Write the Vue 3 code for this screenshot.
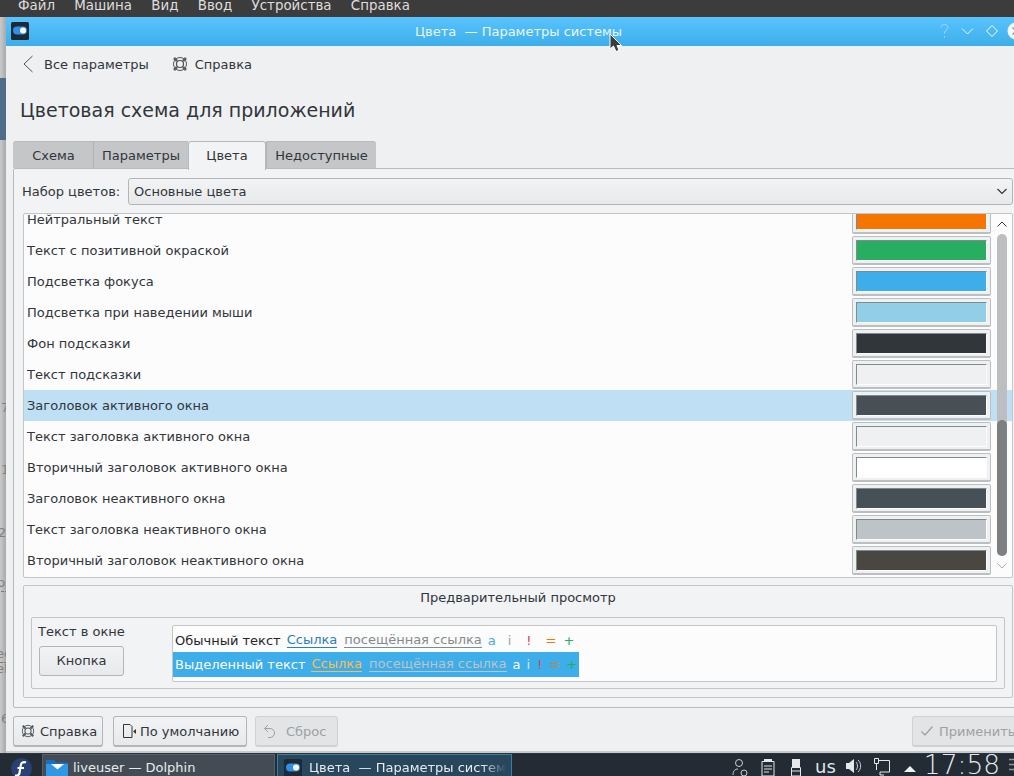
<script setup>
const menu = ['Файл', 'Машина', 'Вид', 'Ввод', 'Устройства', 'Справка']
const tabs = ['Схема', 'Параметры', 'Цвета', 'Недоступные']

const rows = [
  { label: 'Нейтральный текст', color: '#f67400' },
  { label: 'Текст с позитивной окраской', color: '#27ae60' },
  { label: 'Подсветка фокуса', color: '#3daee9' },
  { label: 'Подсветка при наведении мыши', color: '#93cee9' },
  { label: 'Фон подсказки', color: '#31363b' },
  { label: 'Текст подсказки', color: '#eff0f1' },
  { label: 'Заголовок активного окна', color: '#475057', selected: true },
  { label: 'Текст заголовка активного окна', color: '#eff0f1' },
  { label: 'Вторичный заголовок активного окна', color: '#ffffff' },
  { label: 'Заголовок неактивного окна', color: '#475057' },
  { label: 'Текст заголовка неактивного окна', color: '#bdc3c7' },
  { label: 'Вторичный заголовок неактивного окна', color: '#4a4641' }
]

// bits of the window behind, only their edge shows left of this one
const behind = [
  { text: '7', y: 400, x: 1 },
  { text: '1', y: 462, x: 1 },
  { text: '26', y: 525, x: -2 },
  { text: 'ps', y: 575, x: -3, dashed: true },
  { text: 'ec', y: 646, x: -4, dashed: true },
  { text: 'eL', y: 661, x: -4 },
  { text: '6', y: 711, x: 1 }
]

const windowTitle = 'Цвета  — Параметры системы'
const taskTitle = 'Цвета  — Параметры систем'
</script>

<template>
  <div class="screen">
    <div class="menubar">
      <span v-for="item in menu" :key="item">{{ item }}</span>
    </div>

    <div class="middle">
      <div class="desktop-strip">
        <div class="strip-blue"></div>
        <span
          v-for="bit in behind"
          :key="bit.y"
          class="behind-text"
          :class="{ dashed: bit.dashed }"
          :style="{ top: bit.y - 17 + 'px', left: bit.x + 'px' }"
        >{{ bit.text }}</span>
      </div>

      <div class="window">
        <div class="titlebar">
          <svg class="app-icon" width="18" height="18" viewBox="0 0 18 18">
            <rect width="18" height="18" rx="1.5" fill="#1d2a36" />
            <rect x="2" y="4.5" width="14" height="8" rx="4" fill="#2f8fe8" />
            <circle cx="12" cy="8.5" r="3" fill="#fff" />
          </svg>
          <span class="title-text">{{ windowTitle }}</span>
          <svg class="title-buttons" width="66" height="16" viewBox="0 0 66 16">
            <path d="M1 4.5c0-4 7-4 7 0 0 2.5-3.500 2.500-3.500 6M4.500 13v1.500" fill="none" stroke="#a8dcfa" stroke-width="1" />
            <path d="M22 5.500l5.500 5.500 5.500-5.500" fill="none" stroke="#eaf7ff" stroke-width="1" />
            <path d="M52 2.500l5.500 5.500-5.500 5.500-5.500-5.500z" fill="none" stroke="#fff" stroke-width="1" />
          </svg>
          <svg class="close-button" width="18" height="18" viewBox="0 0 18 18">
            <circle cx="9" cy="9" r="8.500" fill="#f3f8fb" />
            <path d="M5.500 5.500l7 7M12.500 5.500l-7 7" stroke="#8d9aa3" stroke-width="1.400" />
          </svg>
        </div>

        <div class="toolbar">
          <span class="tool">
            <svg width="12" height="18" viewBox="0 0 12 18">
              <path d="M10.500 1L2 9l8.500 8" fill="none" stroke="#4d5358" stroke-width="1" />
            </svg>
            <span class="tool-label">Все параметры</span>
          </span>
          <span class="tool tool-help">
            <svg width="16" height="16" viewBox="0 0 16 16">
              <circle cx="8" cy="8" r="6.500" fill="none" stroke="#4d5257" stroke-width="1" />
              <circle cx="8" cy="8" r="3.500" fill="none" stroke="#4d5257" stroke-width="1.200" />
              <path d="M2 2l3 3M14 2l-3 3M2 14l3-3M14 14l-3-3" stroke="#5a5f63" stroke-width="2.600" />
            </svg>
            <span class="tool-label">Справка</span>
          </span>
        </div>

        <h1 class="heading">Цветовая схема для приложений</h1>

        <div class="tabs">
          <div
            v-for="tab in tabs"
            :key="tab"
            class="tab"
            :class="{ active: tab === 'Цвета' }"
          >
            {{ tab }}
          </div>
        </div>

        <div class="panel">
          <div class="set-row">
            <span class="set-label">Набор цветов:</span>
            <div class="combo">
              <span>Основные цвета</span>
              <svg width="10" height="7" viewBox="0 0 10 7">
                <path d="M.5 1L5 5.500 9.500 1" fill="none" stroke="#31363b" stroke-width="1.200" />
              </svg>
            </div>
          </div>

          <div class="list">
            <div class="list-rows">
              <div
                v-for="row in rows"
                :key="row.label"
                class="row"
                :class="{ selected: row.selected }"
              >
                <span>{{ row.label }}</span>
                <div class="swatch">
                  <div class="swatch-fill" :style="{ background: row.color }"></div>
                </div>
              </div>
            </div>
            <div class="scrollbar">
              <svg class="arrow-up" width="10" height="6" viewBox="0 0 10 6">
                <path d="M.5 5.500L5 1l4.500 4.500" fill="none" stroke="#31363b" stroke-width="1" />
              </svg>
              <div class="track"><div class="thumb"></div></div>
              <svg class="arrow-down" width="10" height="6" viewBox="0 0 10 6">
                <path d="M.5.5L5 5 9.500.5" fill="none" stroke="#a9adb0" stroke-width="1" />
              </svg>
            </div>
          </div>

          <div class="preview">
            <div class="preview-title">Предварительный просмотр</div>
            <div class="preview-frame">
              <div class="preview-left">
                <div class="window-text">Текст в окне</div>
                <div class="sample-button">Кнопка</div>
              </div>
              <div class="preview-view">
                <div class="line normal">
                  <span>Обычный текст</span>
                  <span class="link">Ссылка</span>
                  <span class="visited">посещённая ссылка</span>
                  <span class="c-active">a</span>
                  <span class="c-inactive">i</span>
                  <span class="c-negative">!</span>
                  <span class="c-neutral">=</span>
                  <span class="c-positive">+</span>
                </div>
                <div class="line highlight">
                  <span>Выделенный текст</span>
                  <span class="link-sel">Ссылка</span>
                  <span class="visited-sel">посещённая ссылка</span>
                  <span class="c-a-sel">a</span>
                  <span class="c-i-sel">i</span>
                  <span class="c-negative">!</span>
                  <span class="c-neutral">=</span>
                  <span class="c-positive">+</span>
                </div>
              </div>
            </div>
          </div>
        </div>

        <div class="footer">
          <div class="btn help-btn">
            <svg width="14" height="14" viewBox="0 0 16 16">
              <circle cx="8" cy="8" r="6.500" fill="none" stroke="#4d5257" stroke-width="1" />
              <circle cx="8" cy="8" r="3.500" fill="none" stroke="#4d5257" stroke-width="1.200" />
              <path d="M2 2l3 3M14 2l-3 3M2 14l3-3M14 14l-3-3" stroke="#5a5f63" stroke-width="2.600" />
            </svg>
            Справка
          </div>
          <div class="btn default-btn">
            <svg width="16" height="16" viewBox="0 0 16 16">
              <path d="M2.500 1.500h6.500l2 2v11h-8.500z" fill="none" stroke="#31363b" stroke-width="1" />
              <path d="M15 6l-3 2.500 3 2.500z" fill="#31363b" />
            </svg>
            По умолчанию
          </div>
          <div class="btn disabled reset-btn">
            <svg width="16" height="16" viewBox="0 0 16 16">
              <path d="M6 2L2.500 5.500 6 9M3 5.500h5a4.500 4.500 0 0 1 0 9H6" fill="none" stroke="#9da1a4" stroke-width="1" />
            </svg>
            Сброс
          </div>
          <div class="btn disabled apply-btn">
            <svg width="14" height="12" viewBox="0 0 14 12">
              <path d="M1.500 6.500L5 10l7.500-8.500" fill="none" stroke="#9da1a4" stroke-width="1.200" />
            </svg>
            Применить
          </div>
        </div>
      </div>
    </div>

    <div class="taskbar">
      <svg class="fedora" width="21" height="21" viewBox="0 0 21 21">
        <circle cx="10.500" cy="10.500" r="10.500" fill="#294172" />
        <path d="M15 4.500c-3-1-5 .5-5.300 3L8.500 15c-.3 2-2 3-4.500 2.500M6.500 10h6.500" fill="none" stroke="#fff" stroke-width="2.200" />
      </svg>
      <div class="task">
        <svg width="22" height="18" viewBox="0 0 22 18">
          <path d="M0 1h8l2 2.500h12V18H0z" fill="#1b6fbf" />
          <path d="M0 5h22v13H0z" fill="#2f97e6" />
          <path d="M5 5h13l-6.500 5.500z" fill="#fff" />
        </svg>
        <span>liveuser — Dolphin</span>
      </div>
      <div class="task current">
        <svg width="18" height="18" viewBox="0 0 18 18">
          <rect width="18" height="18" rx="1.500" fill="#1d2a36" />
          <rect x="2" y="4.500" width="14" height="8" rx="4" fill="#2f8fe8" />
          <circle cx="12" cy="8.500" r="3" fill="#fff" />
        </svg>
        <span class="task-fade">{{ taskTitle }}</span>
      </div>

      <div class="tray">
        <svg class="tray-user" width="16" height="18" viewBox="0 0 16 18">
          <circle cx="7" cy="5" r="3.500" fill="none" stroke="#c9ced2" stroke-width="1" />
          <path d="M1 17c0-4 2-6 5-6" fill="none" stroke="#c9ced2" stroke-width="1" />
          <circle cx="12" cy="15" r="3" fill="none" stroke="#c9ced2" stroke-width="1" />
        </svg>
        <svg class="tray-clip" width="14" height="18" viewBox="0 0 14 18">
          <path d="M1 3.500h12V18H1z" fill="none" stroke="#e5e8ea" stroke-width="1" />
          <path d="M3 1h8v3H3z" fill="#e5e8ea" />
          <path d="M3 8h8M3 11h8M3 14h5" stroke="#e5e8ea" stroke-width="1" />
        </svg>
        <svg class="tray-usb" width="10" height="18" viewBox="0 0 10 18">
          <path d="M1 1h8v8H1z" fill="#e5e8ea" />
          <path d="M.5 9.500h9V18h-9zM.5 13h9" fill="none" stroke="#e5e8ea" stroke-width="1" />
        </svg>
        <span class="layout">us</span>
        <svg class="tray-sound" width="16" height="16" viewBox="0 0 16 16">
          <path d="M0 5h3l5-4v14l-5-4H0z" fill="#e5e8ea" />
          <path d="M10 4c2 2 2 6 0 8M12 2c3.500 3 3.500 9 0 12" fill="none" stroke="#c9ced2" stroke-width="1" />
        </svg>
        <svg class="tray-net" width="16" height="18" viewBox="0 0 16 18">
          <path d="M.5.500h4v5h-4zM4.500 2.500h11V14H6M2.500 5.500V12M6 14v3h4" fill="none" stroke="#e5e8ea" stroke-width="1" />
        </svg>
        <svg class="tray-arrow" width="12" height="6" viewBox="0 0 12 6">
          <path d="M6 0l6 6H0z" fill="#f0f2f3" />
        </svg>
        <span class="clock">17:58</span>
        <svg class="tray-menu" width="8" height="16" viewBox="0 0 8 16">
          <path d="M0 4.500h8M0 9.500h8M0 14.500h8" stroke="#8e9499" stroke-width="1.500" />
        </svg>
      </div>
    </div>

    <svg class="cursor" width="14" height="20" viewBox="0 0 14 20">
      <path d="M1 1v15l3.500-3 2.500 5.500 3-1.200L8 12.500h4.500z" fill="#3c3c3c" stroke="#fff" stroke-width="1" />
    </svg>
  </div>
</template>

<style>
html, body {
  margin: 0;
  overflow: hidden;
}
</style>

<style scoped>
.screen {
  position: relative;
  width: 1014px;
  height: 776px;
  overflow: hidden;
  display: flex;
  flex-direction: column;
  font-family: "DejaVu Sans", sans-serif;
  font-size: 13px;
  color: #31363b;
  background: #232b34;
}

.menubar {
  height: 17px;
  flex: none;
  background: #3c3c3c;
  color: #dedede;
  display: flex;
  gap: 19.3px;
  padding-left: 18px;
  font-size: 13.4px;
  line-height: 11px;
  overflow: hidden;
}

.middle {
  flex: none;
  height: 736px;
  display: flex;
}

.desktop-strip {
  position: relative;
  flex: none;
  width: 6px;
  overflow: hidden;
  background: linear-gradient(to right, #c9cacb, #a8a9aa);
  padding-top: 61px;
}

.strip-blue {
  height: 62px;
  background: #4f6d8b;
}

.behind-text {
  position: absolute;
  font-size: 13px;
  line-height: 16px;
  color: #83807c;
}

.behind-text.dashed {
  border-bottom: 1px dashed #777;
}

.window {
  flex: none;
  width: 1023px;
  background: #eff0f1;
  display: flex;
  flex-direction: column;
  box-shadow: inset 0 -2px 0 #c8cacb;
}

.titlebar {
  position: relative;
  flex: none;
  height: 29px;
  background: linear-gradient(#58c3ff, #3daee9);
  display: flex;
  align-items: center;
  justify-content: center;
}

.app-icon {
  position: absolute;
  left: 5px;
  top: 5px;
}

.title-text {
  color: #e9f6fe;
  white-space: pre;
  margin-left: 2px;
}

.title-buttons {
  position: absolute;
  left: 934px;
  top: 6px;
}

.close-button {
  position: absolute;
  left: 1001px;
  top: 5px;
}

.toolbar {
  flex: none;
  height: 36px;
  display: flex;
  align-items: center;
  padding-left: 16px;
}

.tool {
  display: flex;
  align-items: center;
}

.tool-label {
  margin-left: 10px;
}

.tool-help {
  margin-left: 23px;
}

.tool-help .tool-label {
  margin-left: 7px;
}

.heading {
  flex: none;
  margin: 0;
  height: 59px;
  padding: 14px 0 0 14px;
  box-sizing: border-box;
  font-size: 19px;
  font-weight: 400;
  line-height: 28px;
}

.tabs {
  flex: none;
  display: flex;
  height: 27px;
  margin-left: 7px;
  position: relative;
  z-index: 1;
}

.tab {
  box-sizing: border-box;
  height: 27px;
  line-height: 27px;
  text-align: center;
  background: #c4c6c8;
  border-left: 1px solid #aeb1b3;
  border-top: 1px solid #b8bbbd;
}

.tab:nth-child(1) { width: 80px; border-left: 1px solid #c4c6c8; border-radius: 3px 0 0 0; }
.tab:nth-child(2) { width: 95px; }
.tab:nth-child(3) { width: 78px; }
.tab:nth-child(4) { width: 110px; border-radius: 0 3px 0 0; }

.tab.active {
  height: 29px;
  background: #f2f3f4;
  border: 1px solid #b8bbbd;
  border-bottom: none;
  border-radius: 3px 3px 0 0;
}

.panel {
  flex: none;
  box-sizing: border-box;
  height: 540px;
  margin-left: 7px;
  background: #f2f3f4;
  border: 1px solid #b8bbbd;
  border-radius: 2px;
  padding: 9px 8px 0 8px;
}

.set-row {
  display: flex;
  align-items: center;
  height: 27px;
}

.set-label {
  width: 106px;
  flex: none;
}

.combo {
  flex: none;
  box-sizing: border-box;
  width: 885px;
  height: 27px;
  display: flex;
  align-items: center;
  justify-content: space-between;
  padding: 0 5px 0 5px;
  background: linear-gradient(#f2f3f4, #e8e9ea);
  border: 1px solid #b3b6b8;
  border-radius: 3px;
}

.list {
  position: relative;
  box-sizing: border-box;
  width: 990px;
  height: 365px;
  margin: 8px 0 0 1px;
  background: #fcfcfc;
  border: 1px solid #c3c5c7;
  border-radius: 2px;
  overflow: hidden;
}

.list-rows {
  margin-top: -10px;
}

.row {
  height: 31px;
  display: flex;
  align-items: center;
  justify-content: space-between;
  padding-left: 3px;
  padding-right: 21px;
}

.row.selected {
  background: #bfdff4;
}

.swatch {
  box-sizing: border-box;
  width: 139px;
  height: 29px;
  padding: 3px;
  background: #eff0f1;
  border: 1px solid #bcbfc1;
  border-bottom-width: 2px;
  border-radius: 2px;
}

.swatch-fill {
  box-sizing: border-box;
  height: 21px;
  border-top: 1px solid #7f8c8d;
  border-left: 1px solid #7f8c8d;
  border-right: 1px solid #fcfcfc;
  border-bottom: 1px solid #fcfcfc;
}

.scrollbar {
  position: absolute;
  right: 5px;
  top: 0;
  bottom: 0;
  width: 10px;
  background: #fcfcfc;
  display: flex;
  flex-direction: column;
  align-items: center;
}

.arrow-up {
  margin-top: 7px;
  flex: none;
}

.arrow-down {
  margin-top: 7px;
  flex: none;
}

.track {
  position: relative;
  flex: none;
  width: 10px;
  height: 322px;
  margin-top: 7px;
  background: #bdbec0;
  border-radius: 5px;
}

.thumb {
  position: absolute;
  left: 0;
  right: 0;
  bottom: 0;
  height: 136px;
  background: #7d8083;
  border-radius: 5px;
}

.preview {
  box-sizing: border-box;
  width: 990px;
  height: 113px;
  margin: 7px 0 0 1px;
  border: 1px solid #c3c5c7;
  border-radius: 2px;
  padding: 0 7px;
}

.preview-title {
  height: 31px;
  line-height: 23px;
  text-align: center;
}

.preview-frame {
  box-sizing: border-box;
  height: 72px;
  display: flex;
  border: 1px solid #c3c5c7;
  border-radius: 2px;
  padding: 7px 7px 0 6px;
}

.preview-left {
  flex: none;
  width: 134px;
}

.window-text {
  line-height: 14px;
}

.sample-button {
  box-sizing: border-box;
  width: 85px;
  height: 30px;
  margin: 7px 0 0 1px;
  line-height: 28px;
  text-align: center;
  background: linear-gradient(#f2f3f4, #e8e9ea);
  border: 1px solid #b3b6b8;
  border-radius: 3px;
}

.preview-view {
  flex: none;
  box-sizing: border-box;
  width: 825px;
  height: 57px;
  background: #fcfcfc;
  border: 1px solid #c3c5c7;
  border-radius: 2px;
}

.line {
  display: flex;
  width: max-content;
  white-space: pre;
  padding-left: 2px;
}

.line.normal {
  box-sizing: border-box;
  height: 26px;
  padding-top: 2px;
  align-items: center;
  color: #232629;
}

.line.highlight {
  height: 25px;
  align-items: center;
  padding-right: 2px;
  background: #3daee9;
  color: #fcfcfc;
}

.link {
  color: #2980b9;
  border-bottom: 1px solid #2980b9;
  line-height: 14px;
  margin-left: 6px;
}

.visited {
  color: #7f8c8d;
  border-bottom: 1px solid #7f8c8d;
  line-height: 14px;
  margin-left: 7px;
}

.c-active { color: #3daee9; margin-left: 6px; }
.c-inactive { color: #9fa6a9; margin-left: 12px; }
.normal .c-negative { color: #da4453; margin-left: 15px; }
.normal .c-neutral { color: #f67400; margin-left: 14px; }
.normal .c-positive { color: #27ae60; margin-left: 7px; }

.link-sel {
  color: #fdbc4b;
  border-bottom: 1px solid #fdbc4b;
  line-height: 14px;
  margin-left: 6px;
}

.visited-sel {
  color: #bdc3c7;
  border-bottom: 1px solid #bdc3c7;
  line-height: 14px;
  margin-left: 7px;
}

.c-a-sel { margin-left: 6px; }
.c-i-sel { color: #d5e6f0; margin-left: 6px; }
.highlight .c-negative { color: #da4453; margin-left: 7px; }
.highlight .c-neutral { color: #f67400; margin-left: 7px; }
.highlight .c-positive { color: #2aae4a; margin-left: 6px; }

.footer {
  flex: none;
  position: relative;
  display: flex;
  height: 31px;
  margin-top: 8px;
  padding-left: 7px;
}

.btn {
  box-sizing: border-box;
  height: 31px;
  display: flex;
  align-items: center;
  padding-left: 7px;
  white-space: nowrap;
  background: linear-gradient(#f2f3f4, #e8e9ea);
  border: 1px solid #b3b6b8;
  border-bottom-width: 2px;
  border-radius: 3px;
}

.help-btn { width: 90px; gap: 5px; }
.default-btn { width: 134px; margin-left: 10px; gap: 3px; }
.reset-btn { width: 83px; margin-left: 8px; gap: 8px; padding-left: 6px; }

.apply-btn {
  position: absolute;
  left: 906px;
  top: 0;
  width: 120px;
  gap: 5px;
}

.btn.disabled {
  background: #e3e4e5;
  color: #9da1a4;
  border-color: #cfd1d2;
}

.taskbar {
  flex: none;
  box-sizing: border-box;
  height: 23px;
  background: #232b34;
  border-top: 1px solid #2b333c;
  display: flex;
  position: relative;
  color: #e8ebed;
  overflow: hidden;
}

.fedora {
  position: absolute;
  left: 11px;
  top: 4px;
}

.task {
  position: absolute;
  top: 0;
  left: 42px;
  box-sizing: border-box;
  width: 233px;
  height: 24px;
  display: flex;
  align-items: center;
  gap: 5px;
  padding: 2px 0 0 3px;
  background: #434c55;
  border: 1px solid #58616a;
  border-bottom: none;
  overflow: hidden;
  white-space: pre;
}

.task svg {
  flex: none;
}

.task.current {
  left: 277px;
  width: 235px;
  padding-left: 6px;
  gap: 7px;
  background: #29475c;
  border-color: #3a7ea3;
}

.task-fade {
  -webkit-mask-image: linear-gradient(to right, #000 88%, transparent 100%);
  mask-image: linear-gradient(to right, #000 88%, transparent 100%);
}

.tray {
  position: absolute;
  left: 732px;
  top: 1px;
  display: flex;
  align-items: flex-start;
  white-space: nowrap;
}

.tray svg {
  flex: none;
  margin-top: 3px;
}

.tray-user { margin-right: 13px; }
.tray-clip { margin-right: 16px; }
.tray-usb { margin-right: 14px; }
.tray-sound { margin-right: 12px; }
.tray-net { margin-right: 14px; }

.layout {
  font-size: 18px;
  line-height: 20px;
  margin-top: 2px;
  margin-right: 10px;
  color: #dfe3e6;
}

.tray .tray-arrow {
  margin-top: 11px;
  margin-right: 8px;
}

.clock {
  font-size: 26.5px;
  font-weight: 200;
  line-height: 22px;
  margin-top: -1px;
}

.tray .tray-menu {
  margin-left: 9px;
  margin-top: 0;
}

.cursor {
  position: absolute;
  left: 609px;
  top: 33px;
}
</style>
